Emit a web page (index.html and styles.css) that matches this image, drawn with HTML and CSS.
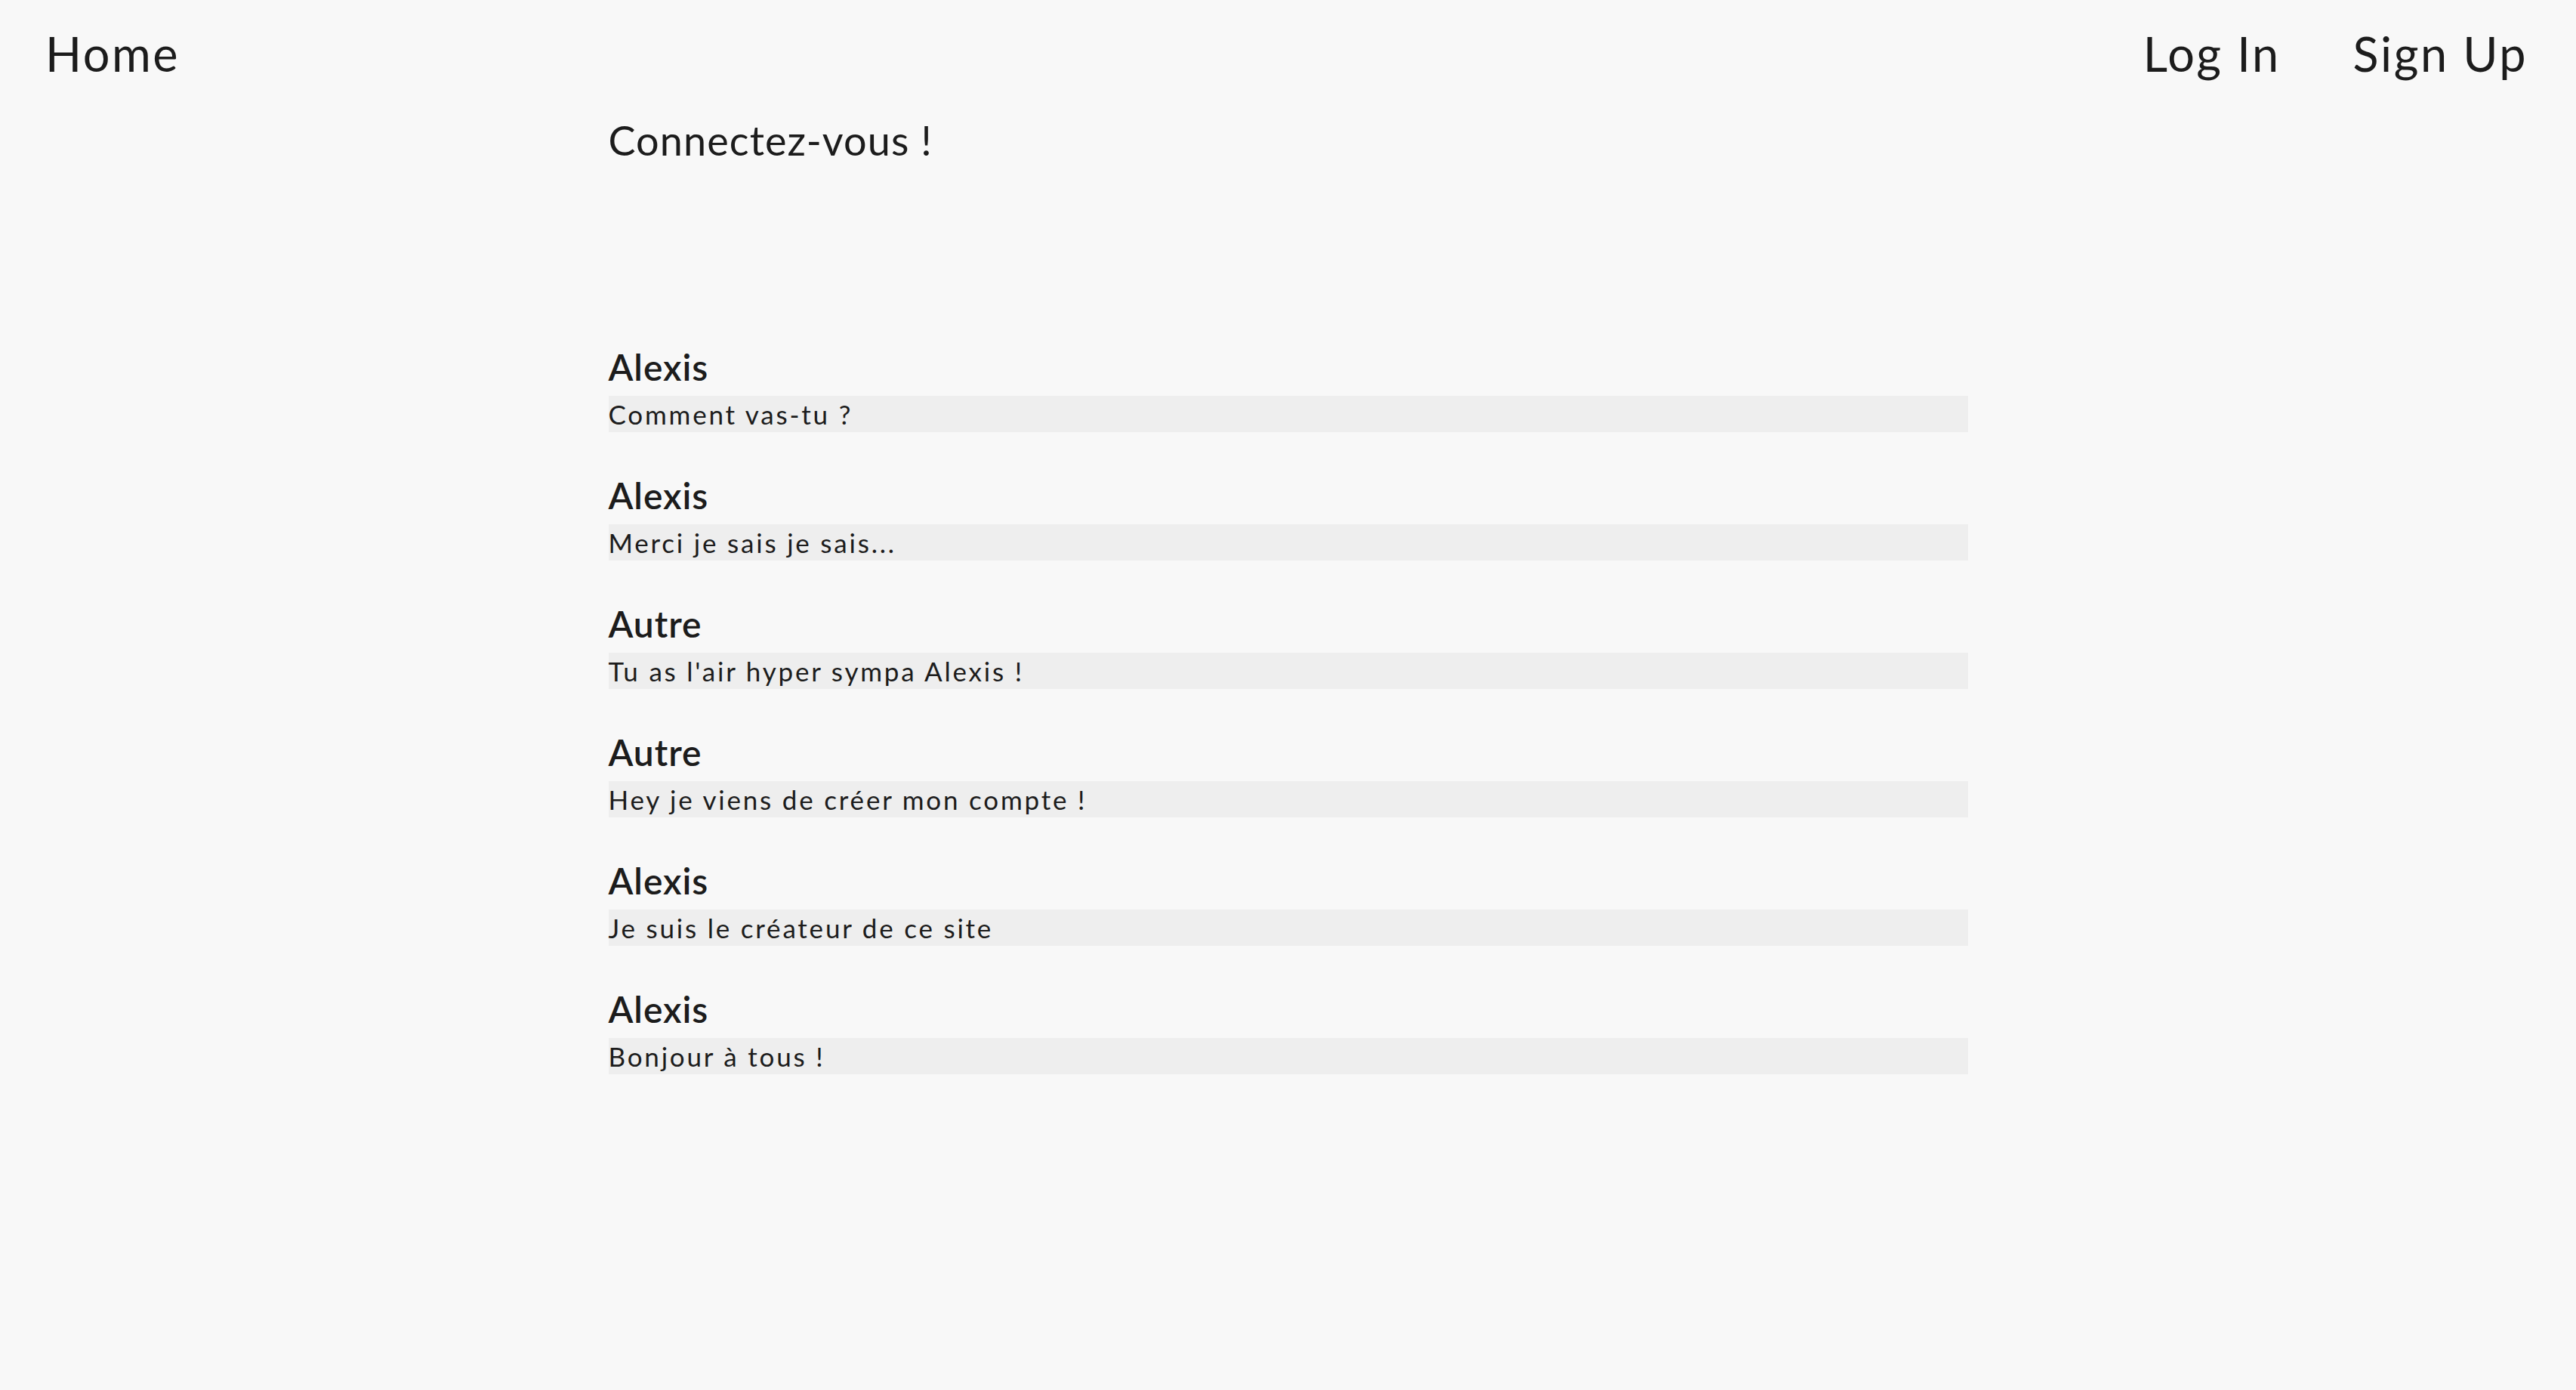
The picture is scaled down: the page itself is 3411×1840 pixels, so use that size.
FILE: index.html
```html
<!DOCTYPE html>
<html lang="fr">
<head>
<meta charset="utf-8">
<title>Chat</title>
<link rel="stylesheet" href="styles.css">
</head>
<body>
<header class="nav">
  <a class="nav-link" href="#">Home</a>
  <div class="nav-right">
    <a class="nav-link" href="#">Log In</a>
    <a class="nav-link" href="#">Sign Up</a>
  </div>
</header>
<main class="content">
  <h2 class="title">Connectez-vous !</h2>
  <section class="messages">
    <div class="message">
      <div class="author">Alexis</div>
      <div class="text">Comment vas-tu ?</div>
    </div>
    <div class="message">
      <div class="author">Alexis</div>
      <div class="text">Merci je sais je sais...</div>
    </div>
    <div class="message">
      <div class="author">Autre</div>
      <div class="text">Tu as l'air hyper sympa Alexis !</div>
    </div>
    <div class="message">
      <div class="author">Autre</div>
      <div class="text">Hey je viens de créer mon compte !</div>
    </div>
    <div class="message">
      <div class="author">Alexis</div>
      <div class="text">Je suis le créateur de ce site</div>
    </div>
    <div class="message">
      <div class="author">Alexis</div>
      <div class="text">Bonjour à tous !</div>
    </div>
  </section>
</main>
</body>
</html>
```

FILE: styles.css
```css
html, body {
  margin: 0;
  padding: 0;
  background: #f8f8f8;
  color: #1c1c1c;
  font-family: "Lato", "Noto Sans", sans-serif;
}

.nav {
  display: flex;
  justify-content: space-between;
  align-items: baseline;
  padding: 33px 64px 0 60px;
}

.nav-right {
  display: flex;
  gap: 96px;
}

.nav-link {
  font-size: 63px;
  line-height: 1.2;
  color: #1c1c1c;
  text-decoration: none;
  font-weight: 400;
  letter-spacing: 0.04em;
}

.content {
  width: 1800px;
  margin: 0 auto;
}

.title {
  margin: 45px 0 0 0;
  font-size: 54px;
  line-height: 1.2;
  font-weight: 400;
  letter-spacing: 0.02em;
}

.messages {
  display: flex;
  flex-direction: column;
  gap: 55px;
  margin-top: 239px;
}

.author {
  font-size: 48px;
  line-height: 58px;
  font-weight: 600;
  margin-bottom: 9px;
  letter-spacing: 0.02em;
}

.text {
  background: #eeeeee;
  font-size: 35px;
  line-height: 48px;
  height: 48px;
  letter-spacing: 0.08em;
}
```
